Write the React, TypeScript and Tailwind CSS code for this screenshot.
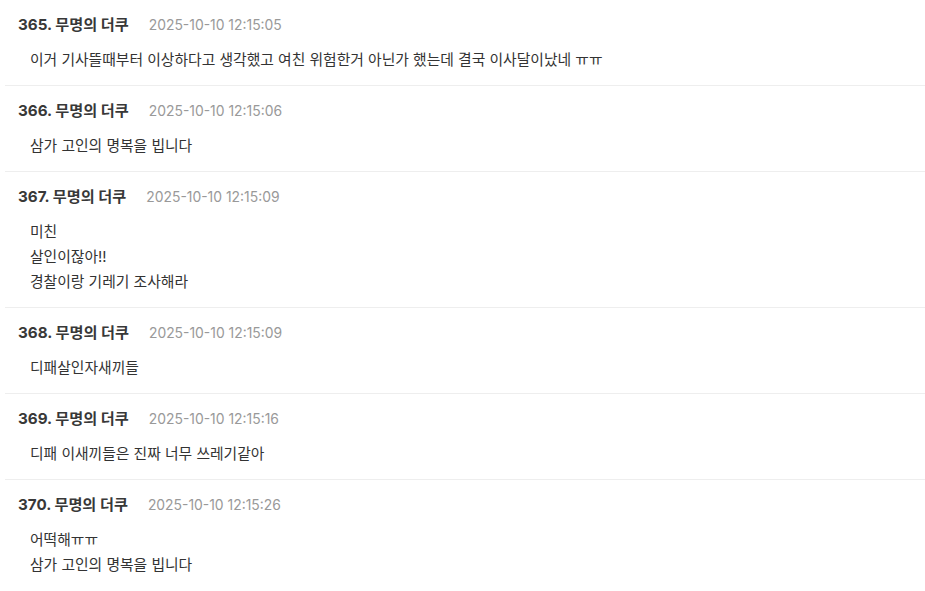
const comments = [
  { no: 365, time: "2025-10-10 12:15:05", lines: ["이거 기사뜰때부터 이상하다고 생각했고 여친 위험한거 아닌가 했는데 결국 이사달이났네 ㅠㅠ"] },
  { no: 366, time: "2025-10-10 12:15:06", lines: ["삼가 고인의 명복을 빕니다"] },
  { no: 367, time: "2025-10-10 12:15:09", lines: ["미친", "살인이잖아!!", "경찰이랑 기레기 조사해라"] },
  { no: 368, time: "2025-10-10 12:15:09", lines: ["디패살인자새끼들"] },
  { no: 369, time: "2025-10-10 12:15:16", lines: ["디패 이새끼들은 진짜 너무 쓰레기같아"] },
  { no: 370, time: "2025-10-10 12:15:26", lines: ["어떡해ㅠㅠ", "삼가 고인의 명복을 빕니다"] },
];

export default function App() {
  return (
    <div
      className="min-h-screen w-full bg-white"
      style={{ fontFamily: '"Inter", "Noto Sans CJK KR", sans-serif' }}
    >
      {comments.map((c) => (
        <div
          key={c.no}
          className="ml-[5px] pl-[13px] pt-[15px] pb-[12px] border-b border-[#eeeeee] last:border-b-0"
        >
          <div className="flex items-center h-5 leading-5">
            <span className="text-[15.2px] font-bold text-[#383838]">
              {c.no}. 무명의 더쿠
            </span>
            <span className="ml-[20px] text-[13.9px] text-[#999999]">{c.time}</span>
          </div>
          <div className="mt-[13px] pl-[12px] text-[14.8px] leading-[25px] text-[#333333]">
            {c.lines.map((l, j) => (
              <div key={j}>{l}</div>
            ))}
          </div>
        </div>
      ))}
    </div>
  );
}
